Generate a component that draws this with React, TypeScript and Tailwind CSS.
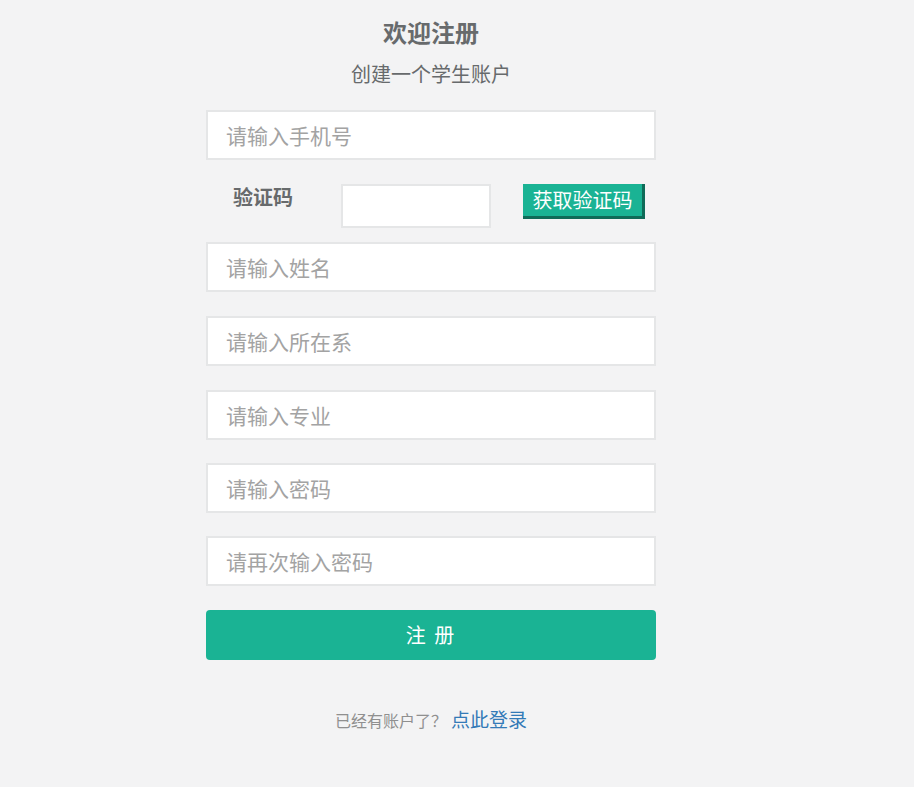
import React from "react";

const font = { fontFamily: '"Noto Sans CJK SC", "Noto Sans", sans-serif' };

function Field({ placeholder, className = "" }: { placeholder: string; className?: string }) {
  return (
    <input
      type="text"
      placeholder={placeholder}
      className={`block w-[450px] h-[50px] border-2 border-[#e5e6e7] bg-white pl-[18px] text-[21px] text-[#676a6c] placeholder:text-[#a3a3a3] outline-none ${className}`}
      style={font}
    />
  );
}

export default function App() {
  return (
    <div className="min-h-[787px] bg-[#f3f3f4]" style={font}>
      <div className="w-[450px] ml-[206px] pt-[17px] flex flex-col">
        <h3 className="text-center text-[24px] leading-[30px] font-bold text-[#676a6c]">欢迎注册</h3>
        <p className="mt-[14px] text-center text-[20px] leading-[26px] text-[#676a6c]">创建一个学生账户</p>
        <Field placeholder="请输入手机号" className="mt-[23px]" />
        <div className="mt-[24px] flex items-start h-[44px]">
          <label className="ml-[27px] w-[108px] text-[20px] leading-[26px] font-bold text-[#676a6c]">验证码</label>
          <input
            type="text"
            className="w-[150px] h-[44px] border-2 border-[#e5e6e7] bg-white outline-none"
          />
          <button
            type="button"
            className="ml-[32px] w-[122px] h-[35px] bg-[#1ab394] text-white text-[20px] leading-[32px] border-r-[3px] border-b-[3px] border-[#0f6b58] flex items-center justify-center"
            style={font}
          >
            获取验证码
          </button>
        </div>
        <Field placeholder="请输入姓名" className="mt-[14px]" />
        <Field placeholder="请输入所在系" className="mt-[24px]" />
        <Field placeholder="请输入专业" className="mt-[24px]" />
        <Field placeholder="请输入密码" className="mt-[23px]" />
        <Field placeholder="请再次输入密码" className="mt-[23px]" />
        <button
          type="button"
          className="mt-[24px] w-[450px] h-[50px] rounded-[4px] bg-[#1ab394] text-white text-[20px] tracking-[2px]"
          style={font}
        >
          注 册
        </button>
        <p className="mt-[46px] text-center text-[16px] leading-[26px] text-[#8f8f8f]">
          已经有账户了？
          <a href="#" className="ml-[4px] text-[19px] text-[#337ab7]">点此登录</a>
        </p>
      </div>
    </div>
  );
}
